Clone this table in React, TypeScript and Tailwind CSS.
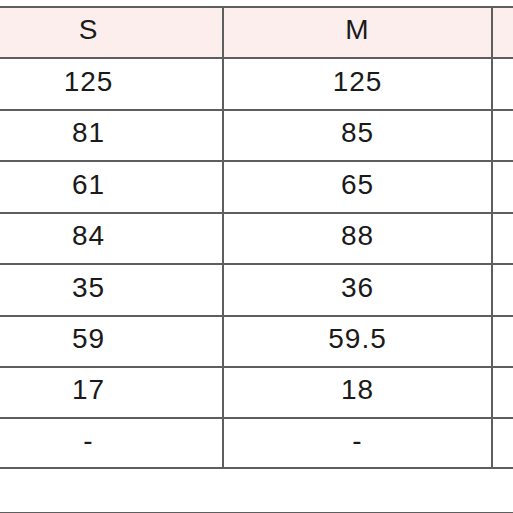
import React from "react";

const rows: { h: string; s: string; m: string }[] = [
  { h: "h-[52px]", s: "125", m: "125" },
  { h: "h-[51px]", s: "81", m: "85" },
  { h: "h-[52px]", s: "61", m: "65" },
  { h: "h-[51px]", s: "84", m: "88" },
  { h: "h-[52px]", s: "35", m: "36" },
  { h: "h-[51px]", s: "59", m: "59.5" },
  { h: "h-[51px]", s: "17", m: "18" },
  { h: "h-[50px]", s: "-", m: "-" },
];

function Cell({ children, h, header }: { children?: React.ReactNode; h: string; header?: boolean }) {
  return (
    <div
      className={`${h} w-[269px] shrink-0 border-r-2 border-b-2 border-[#5e5e5e] flex items-center justify-center pb-[5px] ${
        header ? "bg-[#fdeeee]" : "bg-white"
      }`}
    >
      {children}
    </div>
  );
}

export default function App() {
  return (
    <div
      className="w-[513px] h-[513px] overflow-hidden bg-white text-[#1a1a1a] text-[28px] tracking-[1px]"
      style={{ fontFamily: '"Liberation Sans", "Noto Sans CJK JP", sans-serif' }}
    >
      <div className="pt-[6px] ml-[-45px] w-[820px]">
        <div className="border-t-2 border-[#5e5e5e]">
          <div className="flex">
            <Cell h="h-[51px]" header>S</Cell>
            <Cell h="h-[51px]" header>M</Cell>
            <Cell h="h-[51px]" header />
          </div>
          {rows.map((r, i) => (
            <div className="flex" key={i}>
              <Cell h={r.h}>{r.s}</Cell>
              <Cell h={r.h}>{r.m}</Cell>
              <Cell h={r.h} />
            </div>
          ))}
        </div>
        <div className="mt-[43px] border-t-2 border-[#5e5e5e]" />
      </div>
    </div>
  );
}
